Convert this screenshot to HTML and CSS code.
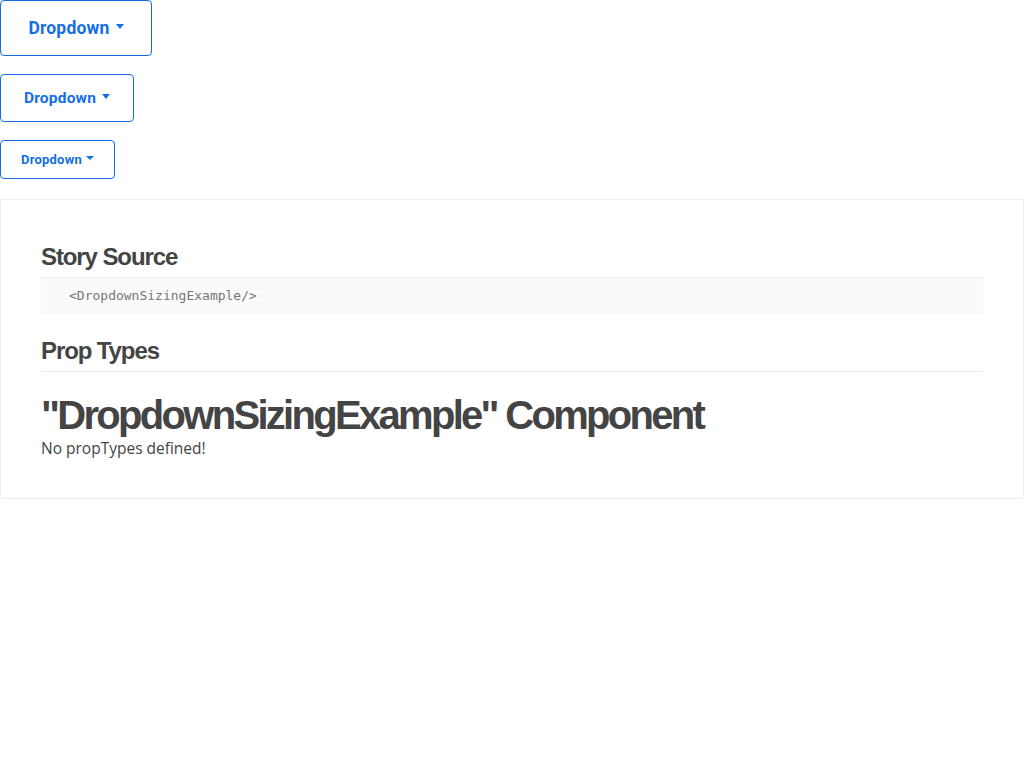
FILE: index.html
```html
<!DOCTYPE html>
<html>
<head>
<meta charset="utf-8">
<link rel="stylesheet" href="styles.css">
</head>
<body>
<div class="buttons">
  <div class="row"><button class="btn btn-lg">Dropdown<span class="caret"></span></button></div>
  <div class="row"><button class="btn btn-md">Dropdown<span class="caret"></span></button></div>
  <div class="row"><button class="btn btn-sm">Dropdown<span class="caret"></span></button></div>
</div>
<div class="info">
  <h1 class="title">Story Source</h1>
  <pre class="code">&lt;DropdownSizingExample/&gt;</pre>
  <h1 class="title title-props">Prop Types</h1>
  <h2 class="comp">"DropdownSizingExample" Component</h2>
  <p class="none">No propTypes defined!</p>
</div>
</body>
</html>
```
FILE: styles.css
```css
html, body { margin: 0; padding: 0; background: #fff; }
body { font-family: "Open Sans", "Liberation Sans", sans-serif; }
.buttons { display: flex; flex-direction: column; gap: 18px; }
.row { display: flex; }
.btn {
  font-family: Roboto, "Liberation Sans", sans-serif;
  font-weight: 700;
  color: #146ee6;
  background: #fff;
  border: 1px solid #146ee6;
  border-radius: 4px;
  display: flex;
  align-items: center;
  justify-content: center;
  margin: 0;
  padding: 0;
  box-sizing: border-box;
  letter-spacing: 0.2px;
}
.btn-lg { width: 152px; height: 56px; font-size: 17.5px; }
.btn-md { width: 134px; height: 48px; font-size: 15.5px; }
.btn-sm { width: 115px; height: 39px; font-size: 13px; }
.caret {
  display: inline-block;
  width: 0; height: 0;
  margin-left: 6px;
  border-left: 4.5px solid transparent;
  border-right: 4.5px solid transparent;
  border-top: 5px solid currentColor;
  position: relative; top: -2px;
}
.btn-sm .caret { margin-left: 4px; border-left-width: 4px; border-right-width: 4px; border-top-width: 4px; }
.info {
  margin-top: 20px;
  border: 1px solid #eee;
  border-radius: 2px;
  padding: 22px 40px 40px;
  box-shadow: 0 2px 3px rgba(0,0,0,0.05);
  color: #444;
}
.title {
  font-family: "Liberation Sans", Arial, sans-serif;
  font-size: 24px;
  font-weight: 700;
  letter-spacing: -1.1px;
  margin: 20px 0 0;
  padding: 0 0 5px;
  border-bottom: 1px solid #eee;
  line-height: 30px;
  color: #444;
}
.title-props { margin-top: 22px; }
.code {
  margin: 0;
  background: #fafafa;
  padding: 10px 28px;
  font-family: "DejaVu Sans Mono", monospace;
  font-size: 13px;
  color: #777;
  line-height: 16px;
}
.comp {
  font-family: "Liberation Sans", Arial, sans-serif;
  font-size: 40px;
  font-weight: 700;
  letter-spacing: -2.7px;
  margin: 20px 0 0;
  line-height: 46px;
  color: #444;
}
.none { margin: 0; font-size: 15.5px; line-height: 20px; color: #444; }
```
